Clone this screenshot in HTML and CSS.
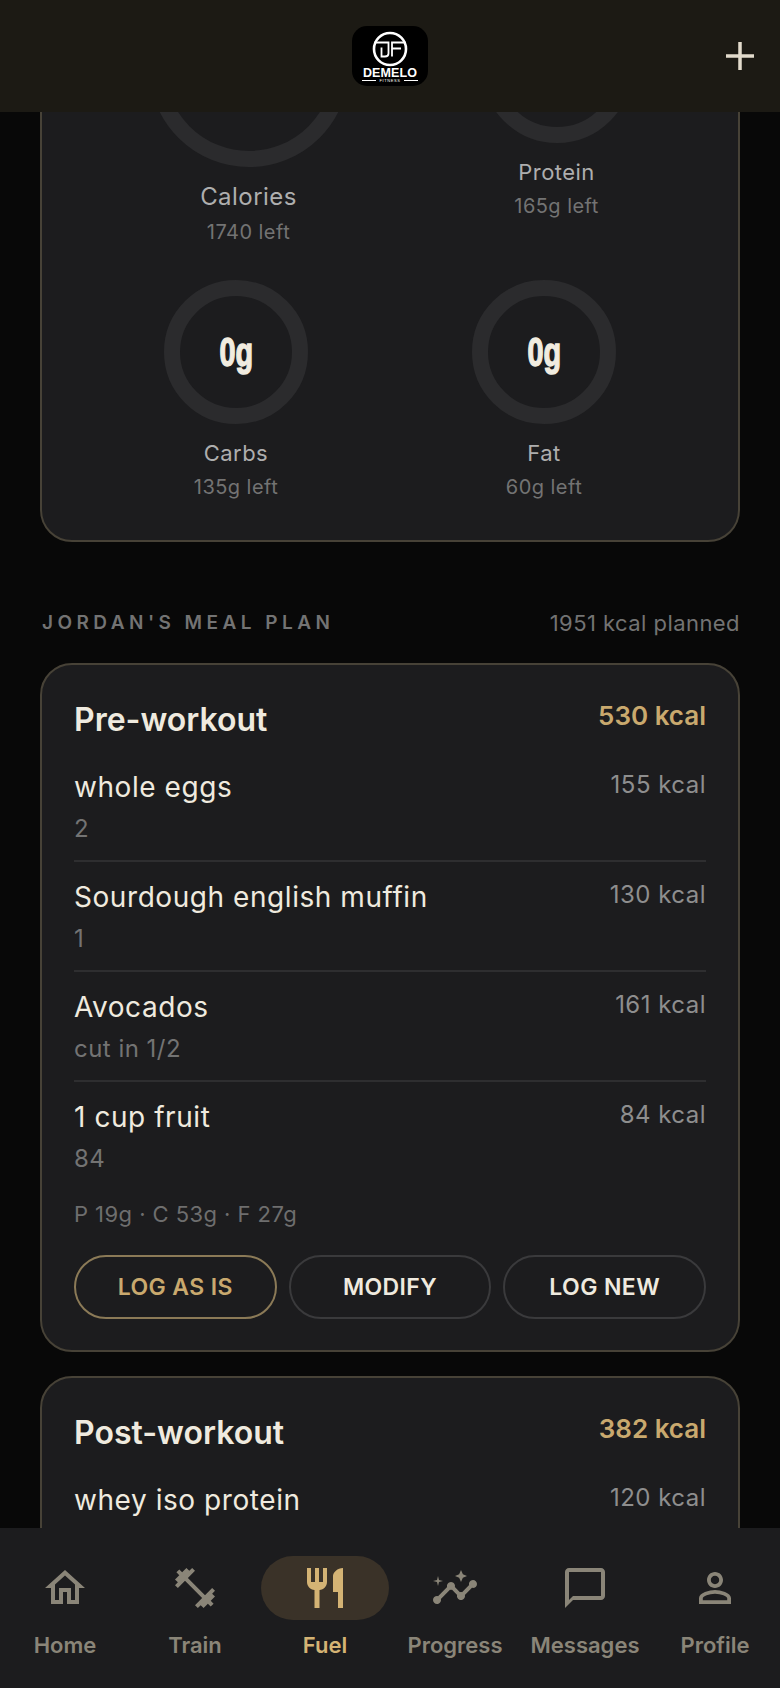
FILE: index.html
```html
<!DOCTYPE html>
<html lang="en">
<head>
<meta charset="utf-8">
<title>Fuel</title>
<link rel="stylesheet" href="styles.css">
</head>
<body>
<header class="topbar">
  <div class="logo">
    <svg class="logo-mark" viewBox="0 0 36 36" width="36" height="36" aria-hidden="true">
      <circle cx="18" cy="18" r="16" fill="none" stroke="#fff" stroke-width="2.6"/>
      <path d="M2.5 11.5H16.5V22.5Q16.5 25.5 13 25.5H9.5V16.5" fill="none" stroke="#fff" stroke-width="1.8"/>
      <path d="M20 25.5V11.5H33.5M20 17.5H29" fill="none" stroke="#fff" stroke-width="1.8"/>
    </svg>
    <span class="logo-name">DEMELO</span>
    <span class="logo-sub">FITNESS</span>
  </div>
  <button class="add-btn" aria-label="Add">
    <svg viewBox="0 0 30 30" width="30" height="30" aria-hidden="true"><path d="M15 1V29M1 15H29" stroke="#e2dbcc" stroke-width="3.5"/></svg>
  </button>
</header>

<main class="content">
  <section class="card macros">
    <div class="macro-row">
      <div class="macro">
        <div class="ring ring-xl"></div>
        <div class="macro-label macro-label-lg">Calories</div>
        <div class="macro-left">1740 left</div>
      </div>
      <div class="macro">
        <div class="ring ring-lg"></div>
        <div class="macro-label">Protein</div>
        <div class="macro-left">165g left</div>
      </div>
    </div>
    <div class="macro-row macro-row-2">
      <div class="macro">
        <div class="ring"><span class="ring-value">0g</span></div>
        <div class="macro-label">Carbs</div>
        <div class="macro-left">135g left</div>
      </div>
      <div class="macro">
        <div class="ring"><span class="ring-value">0g</span></div>
        <div class="macro-label">Fat</div>
        <div class="macro-left">60g left</div>
      </div>
    </div>
  </section>

  <div class="plan-head">
    <h2 class="plan-title">JORDAN'S MEAL PLAN</h2>
    <span class="plan-total">1951 kcal planned</span>
  </div>

  <section class="card meal">
    <div class="meal-head">
      <h3 class="meal-title">Pre-workout</h3>
      <span class="meal-kcal">530 kcal</span>
    </div>
    <div class="food">
      <div><div class="food-name">whole eggs</div><div class="food-qty">2</div></div>
      <span class="food-kcal">155 kcal</span>
    </div>
    <div class="food">
      <div><div class="food-name">Sourdough english muffin</div><div class="food-qty">1</div></div>
      <span class="food-kcal">130 kcal</span>
    </div>
    <div class="food">
      <div><div class="food-name">Avocados</div><div class="food-qty">cut in 1/2</div></div>
      <span class="food-kcal">161 kcal</span>
    </div>
    <div class="food food-last">
      <div><div class="food-name">1 cup fruit</div><div class="food-qty">84</div></div>
      <span class="food-kcal">84 kcal</span>
    </div>
    <div class="meal-macros">P 19g · C 53g · F 27g</div>
    <div class="actions">
      <button class="pill pill-gold">LOG AS IS</button>
      <button class="pill">MODIFY</button>
      <button class="pill">LOG NEW</button>
    </div>
  </section>

  <section class="card meal">
    <div class="meal-head">
      <h3 class="meal-title">Post-workout</h3>
      <span class="meal-kcal">382 kcal</span>
    </div>
    <div class="food">
      <div><div class="food-name">whey iso protein</div></div>
      <span class="food-kcal">120 kcal</span>
    </div>
  </section>
</main>

<nav class="tabbar">
  <a class="tab">
    <span class="tab-icon"><svg viewBox="0 0 24 24" width="48" height="48"><path d="M12 5.69l5 4.5V18h-2v-6H9v6H7v-7.81l5-4.5M12 3L2 12h3v8h6v-6h2v6h6v-8h3L12 3z"/></svg></span>
    <span class="tab-label">Home</span>
  </a>
  <a class="tab">
    <span class="tab-icon"><svg viewBox="0 0 24 24" width="48" height="48"><path d="M20.57 14.86L22 13.43 20.57 12 17 15.57 8.43 7 12 3.43 10.57 2 9.14 3.43 7.71 2 5.57 4.14 4.14 2.71 2.71 4.14l1.43 1.43L2 7.71l1.43 1.43L2 10.57 3.43 12 7 8.43 15.57 17 12 20.57 13.43 22l1.43-1.43L16.29 22l2.14-2.14 1.43 1.43 1.43-1.43-1.43-1.43L22 16.29z"/></svg></span>
    <span class="tab-label">Train</span>
  </a>
  <a class="tab tab-active">
    <span class="tab-icon"><svg viewBox="0 0 24 24" width="48" height="48"><path d="M11 9H9V2H7v7H5V2H3v7c0 2.12 1.66 3.84 3.75 3.97V22h2.5v-9.03C11.34 12.84 13 11.12 13 9V2h-2v7zm5-3v8h2.5v8H21V2c-2.76 0-5 2.24-5 4z"/></svg></span>
    <span class="tab-label">Fuel</span>
  </a>
  <a class="tab">
    <span class="tab-icon"><svg viewBox="0 0 24 24" width="48" height="48"><path d="M21 8c-1.45 0-2.26 1.44-1.93 2.51l-3.55 3.56c-.3-.09-.74-.09-1.04 0l-2.55-2.55C12.27 10.45 11.46 9 10 9c-1.45 0-2.27 1.44-1.93 2.52l-4.56 4.55C2.44 15.74 1 16.55 1 18c0 1.1.9 2 2 2 1.45 0 2.26-1.44 1.93-2.51l4.55-4.56c.3.09.74.09 1.04 0l2.55 2.55C12.73 16.55 13.54 18 15 18c1.45 0 2.27-1.44 1.93-2.52l3.56-3.55c1.07.33 2.51-.48 2.51-1.93 0-1.1-.9-2-2-2z"/><path d="M15 9l.94-2.07L18 6l-2.06-.93L15 3l-.92 2.07L12 6l2.08.93zM3.5 11L4 9l2-.5L4 8l-.5-2L3 8l-2 .5L3 9z"/></svg></span>
    <span class="tab-label">Progress</span>
  </a>
  <a class="tab">
    <span class="tab-icon"><svg viewBox="0 0 24 24" width="48" height="48"><path d="M20 2H4c-1.1 0-2 .9-2 2v18l4-4h14c1.1 0 2-.9 2-2V4c0-1.1-.9-2-2-2zm0 14H6l-2 2V4h16v12z"/></svg></span>
    <span class="tab-label">Messages</span>
  </a>
  <a class="tab">
    <span class="tab-icon"><svg viewBox="0 0 24 24" width="48" height="48"><path d="M12 5.9c1.16 0 2.1.94 2.1 2.1s-.94 2.1-2.1 2.1S9.9 9.16 9.9 8s.94-2.1 2.1-2.1m0 9c2.97 0 6.1 1.46 6.1 2.1v1.1H5.9V17c0-.64 3.13-2.1 6.1-2.1M12 4C9.79 4 8 5.79 8 8s1.79 4 4 4 4-1.79 4-4-1.79-4-4-4zm0 9c-2.67 0-8 1.34-8 4v3h16v-3c0-2.66-5.33-4-8-4z"/></svg></span>
    <span class="tab-label">Profile</span>
  </a>
</nav>
</body>
</html>
```

FILE: styles.css
```css
* { box-sizing: border-box; }
html, body { height: 100%; }
body {
  margin: 0;
  display: flex;
  flex-direction: column;
  height: 100vh;
  overflow: hidden;
  background: #080808;
  color: #efeadf;
  font-family: Inter, "Liberation Sans", sans-serif;
}

.topbar {
  flex: none;
  height: 112px;
  background: #1c1a14;
  display: flex;
  align-items: flex-start;
  justify-content: center;
  padding-top: 26px;
  position: relative;
  z-index: 2;
}
.logo {
  width: 76px;
  height: 60px;
  background: #000;
  border-radius: 15px;
  display: flex;
  flex-direction: column;
  align-items: center;
  padding-top: 5px;
  color: #fff;
}
.logo-mark { flex: none; width: 36px; height: 36px; }
.logo-name {
  font-family: "Liberation Sans", sans-serif;
  font-size: 12.5px;
  line-height: 9px;
  font-weight: 700;
  margin-top: 2px;
  letter-spacing: 0.1px;
}
.logo-sub {
  font-family: "Liberation Sans", sans-serif;
  font-size: 4px;
  line-height: 5px;
  letter-spacing: 0.6px;
  display: flex;
  align-items: center;
  gap: 3px;
}
.logo-sub::before, .logo-sub::after {
  content: "";
  width: 14px;
  height: 1px;
  background: #fff;
}
.add-btn {
  position: absolute;
  right: 25px;
  top: 41px;
  width: 30px;
  height: 30px;
  padding: 0;
  border: 0;
  background: none;
  display: block;
}

.content {
  flex: 1;
  min-height: 0;
  overflow: hidden;
  padding: 0 40px;
}

.card {
  background: #1c1c1e;
  border: 2px solid #474237;
  border-radius: 32px;
}

.macros {
  margin-top: -187px;
  padding: 40px 40px 38px;
}
.macro-row {
  display: flex;
  justify-content: space-around;
  align-items: center;
}
.macro-row-2 { margin-top: 33px; }
.macro {
  display: flex;
  flex-direction: column;
  align-items: center;
}
.ring {
  width: 144px;
  height: 144px;
  border: 16px solid #2b2b2d;
  border-radius: 50%;
  display: flex;
  align-items: center;
  justify-content: center;
}
.ring-xl { width: 200px; height: 200px; }
.ring-lg { width: 150px; height: 150px; }
.ring-value {
  display: inline-block;
  font-family: "Liberation Sans", sans-serif;
  font-size: 40px;
  line-height: 48px;
  font-weight: 700;
  color: #f1ece0;
  transform: scaleX(0.72);
  -webkit-text-stroke: 1.4px #f1ece0;
}
.macro-label {
  margin-top: 14px;
  font-size: 22px;
  line-height: 30px;
  letter-spacing: 0.45px;
  color: #aeaeae;
}
.macro-label-lg { font-size: 24px; line-height: 32px; }
.macro-left {
  margin-top: 4px;
  font-size: 20px;
  line-height: 30px;
  letter-spacing: 0.45px;
  color: #737373;
}

.plan-head {
  display: flex;
  justify-content: space-between;
  align-items: center;
  margin-top: 67px;
  margin-bottom: 26px;
  padding-left: 2px;
}
.plan-title {
  margin: 0;
  font-size: 19px;
  line-height: 28px;
  font-weight: 600;
  letter-spacing: 4.45px;
  color: #737373;
}
.plan-total {
  font-size: 22px;
  line-height: 28px;
  letter-spacing: 0.44px;
  color: #737373;
}

.meal {
  padding: 31px 32px 31px;
  margin-bottom: 24px;
}
.meal-head {
  display: flex;
  justify-content: space-between;
  align-items: flex-start;
  margin-bottom: 8px;
}
.meal-title {
  margin: 0;
  font-size: 32px;
  line-height: 48px;
  font-weight: 600;
  color: #efeadf;
}
.meal-kcal {
  font-size: 26px;
  line-height: 40px;
  font-weight: 600;
  color: #c9a96e;
}
.food {
  display: flex;
  justify-content: space-between;
  align-items: flex-start;
  height: 110px;
  padding-top: 15px;
  border-bottom: 2px solid #2e2e30;
}
.food-last { border-bottom: 0; height: 116px; }
.food-name {
  font-size: 28px;
  line-height: 40px;
  letter-spacing: 0.56px;
  color: #efeadf;
}
.food-qty {
  font-size: 24px;
  line-height: 36px;
  letter-spacing: 0.48px;
  margin-top: 4px;
  color: #737373;
}
.food-kcal {
  font-size: 24px;
  line-height: 36px;
  letter-spacing: 0.48px;
  color: #8e8e8e;
}
.meal-macros {
  font-size: 22px;
  line-height: 32px;
  letter-spacing: 0.44px;
  color: #6e6e6e;
}
.actions {
  display: flex;
  gap: 12px;
  margin-top: 25px;
}
.pill {
  flex: 1;
  height: 64px;
  border-radius: 32px;
  background: none;
  border: 2px solid #3a3a3c;
  color: #efeadf;
  font-family: inherit;
  font-size: 23px;
  font-weight: 600;
  letter-spacing: 0.4px;
}
.pill-gold {
  border-color: #8b7a57;
  color: #c9a96e;
}

.tabbar {
  flex: none;
  height: 160px;
  background: #1c1c1e;
  display: grid;
  grid-template-columns: repeat(6, 1fr);
  padding-top: 28px;
  position: relative;
  z-index: 2;
}
.tab {
  display: flex;
  flex-direction: column;
  align-items: center;
  color: #8a8578;
}
.tab-icon {
  width: 128px;
  height: 64px;
  border-radius: 32px;
  display: flex;
  align-items: center;
  justify-content: center;
}
.tab-icon svg { fill: currentColor; display: block; }
.tab-label {
  margin-top: 9px;
  font-size: 22px;
  line-height: 32px;
  font-weight: 600;
}
.tab-active { color: #d4b374; }
.tab-active .tab-icon { background: #3a3228; }
```
